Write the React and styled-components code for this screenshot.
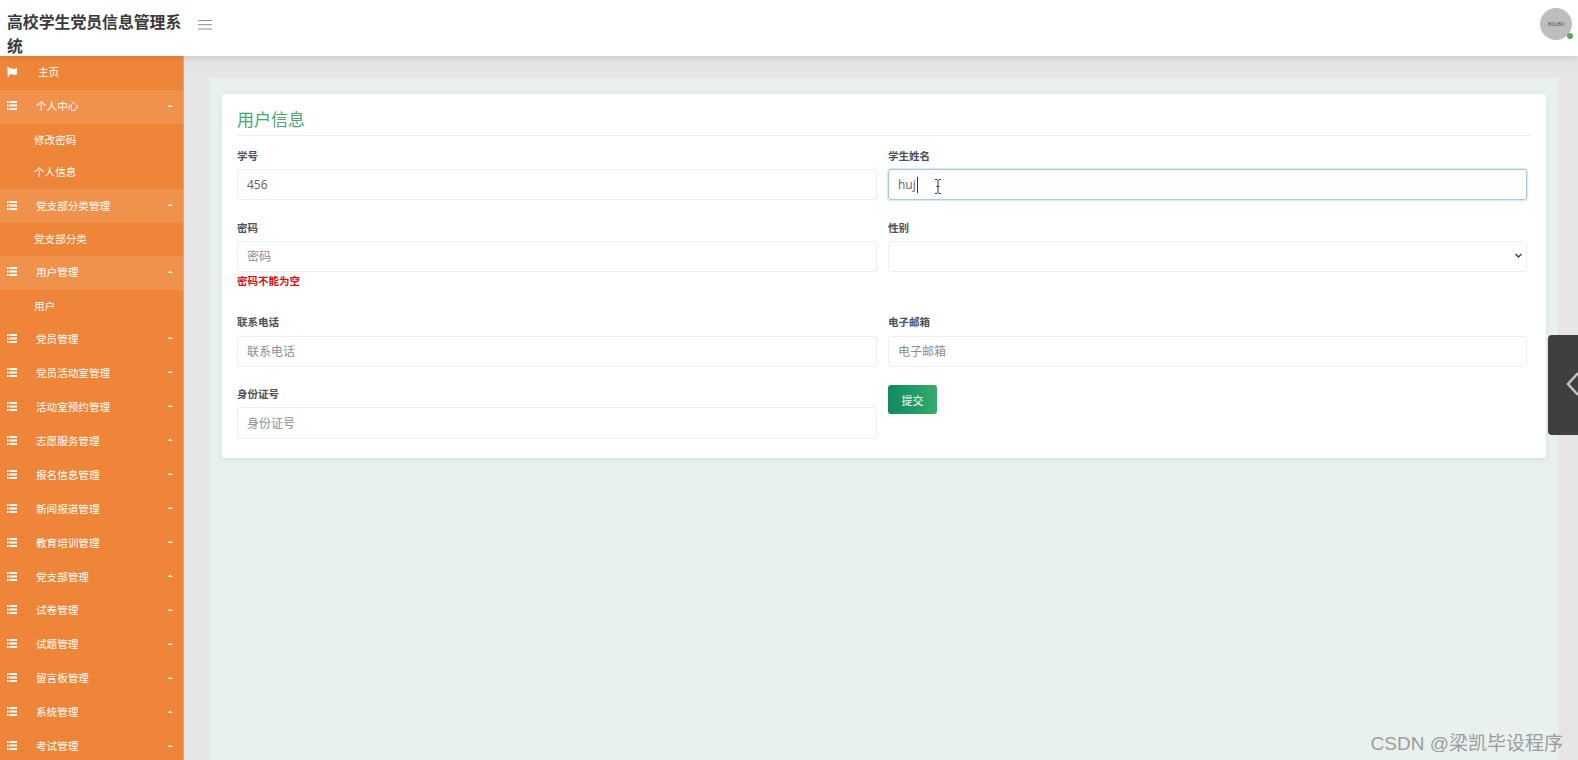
import React from "react";
import styled, { createGlobalStyle } from "styled-components";
import { FaFlag } from "react-icons/fa";

const Global = createGlobalStyle`
  html, body { margin: 0; padding: 0; height: 760px; overflow: hidden; background: #e6e5e7; }
  * { box-sizing: border-box; }
  body { font-family: "Liberation Sans", "Noto Sans CJK SC", sans-serif; }
`;

const Page = styled.div`
  position: relative;
  width: 1578px;
  height: 760px;
  overflow: hidden;
  display: grid;
  grid-template-rows: 56px 1fr;
`;

const Header = styled.header`
  position: relative;
  z-index: 2;
  display: flex;
  align-items: center;
  background: #fff;
  box-shadow: 0 1px 6px rgba(0, 0, 0, 0.1);
  padding-right: 6px;
`;

const Brand = styled.h1`
  width: 184px;
  align-self: flex-start;
  margin: 0;
  padding: 11px 0 0 7px;
  font-size: 15.85px;
  line-height: 24px;
  font-weight: 700;
  color: #3a3a3a;
  flex: none;
`;

const MenuToggle = styled.button`
  display: flex;
  padding: 0;
  margin: -7px 0 0 14px;
  border: 0;
  background: none;
  color: #8c8c8c;
`;

const Spacer = styled.div`
  flex: 1;
`;

const Avatar = styled.div`
  position: relative;
  width: 32px;
  height: 32px;
  margin-top: -8px;
  border-radius: 50%;
  background: #bdbdbd;
  color: #555;
  font-size: 6px;
  line-height: 32px;
  text-align: center;
`;

const OnlineDot = styled.span`
  position: absolute;
  right: -1px;
  bottom: 1px;
  width: 6px;
  height: 6px;
  border-radius: 50%;
  background: #5aa85a;
`;

const Body = styled.div`
  display: grid;
  grid-template-columns: 184px 1fr;
  min-height: 0;
`;

const Sidebar = styled.nav`
  background: #ee8539;
  display: flex;
  flex-direction: column;
  overflow: hidden;
  border-right: 1px solid #f0a06a;
`;

const Row = styled.div`
  flex: none;
  height: ${(p) => (p.$sub ? "32.7px" : "33.95px")};
  display: flex;
  align-items: center;
  color: #fff;
  font-size: 10.6px;
  padding-left: ${(p) => (p.$sub ? "34px" : "7px")};
  padding-bottom: 2px;
  background: ${(p) => (p.$open ? "#f0924c" : "transparent")};
`;

const RowIcon = styled.span`
  width: 29px;
  display: flex;
  flex: none;
  color: #fff;
  font-size: 10px;
`;

const HomeLabel = styled.span`
  margin-left: 2px;
`;

const Caret = styled.span`
  margin-left: auto;
  margin-right: 10px;
  width: 0;
  height: 0;
  border-left: 3px solid transparent;
  border-right: 3px solid transparent;
  border-bottom: 2px solid #fff;
`;

const Main = styled.main`
  padding: 22px 20px 0 26px;
  min-width: 0;
  background: linear-gradient(#dfdfe1, #e6e5e7 14px);
`;

const Panel = styled.section`
  height: 100%;
  background: #e8f1ed;
  padding: 16px 12px 0 12px;
`;

const Card = styled.div`
  background: #fff;
  border-radius: 2px;
  height: 364px;
  padding: 12px 15px 0 15px;
  box-shadow: 0 2px 6px rgba(0, 0, 0, 0.08);
`;

const Title = styled.h2`
  margin: 0;
  height: 30px;
  line-height: 29px;
  font-size: 17px;
  font-weight: 400;
  color: #4aa56f;
  border-bottom: 1px solid #eceeee;
`;

const Form = styled.form`
  display: grid;
  grid-template-columns: 640px 639px;
  column-gap: 11px;
  margin: 0;
  padding-top: 15px;
`;

const Field = styled.div`
  height: ${(p) => p.$h}px;
  position: relative;
`;

const Label = styled.label`
  display: block;
  height: 11px;
  line-height: 11px;
  margin-bottom: ${(p) => p.$gap ?? 7}px;
  font-size: 10.5px;
  font-weight: 700;
  color: #4b5157;
`;

const Input = styled.input`
  display: block;
  width: 100%;
  height: ${(p) => (p.$tall ? 32 : 31)}px;
  padding: 0 9px;
  font-family: "Open Sans", "Noto Sans CJK SC", sans-serif;
  font-size: 12px;
  color: #5a5f64;
  background: #fff;
  border: 1px solid ${(p) => (p.$focus ? "#a5c8e6" : "#eceff0")};
  border-radius: 3px;
  outline: none;
  box-shadow: ${(p) => (p.$focus ? "0 0 1px 1px rgba(150,190,225,.35)" : "none")};
  &::placeholder { color: #8b8f93; }
`;

const Select = styled.select`
  display: block;
  width: 100%;
  height: 31px;
  appearance: none;
  background: #fff;
  border: 1px solid #eceff0;
  border-radius: 3px;
  padding: 0 9px;
  color: #333;
  font-size: 12px;
`;

const SelectArrow = styled.svg`
  position: absolute;
  right: 5px;
  top: 30px;
  pointer-events: none;
`;

const ErrorText = styled.div`
  margin-top: 2px;
  font-size: 10.5px;
  line-height: 14px;
  font-weight: 700;
  color: #d0121b;
`;

const Submit = styled.button`
  width: 49px;
  height: 29px;
  margin-top: -4px;
  padding: 0;
  display: block;
  border: 0;
  border-radius: 3px;
  font-family: inherit;
  font-size: 11px;
  color: #fff;
  background: linear-gradient(90deg, #0e8a5f, #36ab6b);
`;

const TextCaret = styled.span`
  position: absolute;
  left: 29px;
  top: 26px;
  width: 1px;
  height: 16px;
  background: #333;
`;

const MouseCursor = styled.svg`
  position: absolute;
  left: 46px;
  top: 28px;
`;

const DrawerTab = styled.div`
  position: absolute;
  z-index: 3;
  right: 0;
  top: 335px;
  width: 30px;
  height: 100px;
  padding: 36px 0 0 18px;
  border-radius: 4px 0 0 4px;
  background: #3f3f3f;
  color: #c4c4c4;
`;

const Watermark = styled.div`
  position: absolute;
  z-index: 4;
  right: 15px;
  bottom: 2px;
  font-size: 19px;
  line-height: 28px;
  color: #9c9c9c;
  white-space: nowrap;
`;

const menu = [
  { t: "个人中心", open: true },
  { t: "修改密码", sub: true },
  { t: "个人信息", sub: true },
  { t: "党支部分类管理", open: true },
  { t: "党支部分类", sub: true },
  { t: "用户管理", open: true },
  { t: "用户", sub: true },
  { t: "党员管理" },
  { t: "党员活动室管理" },
  { t: "活动室预约管理" },
  { t: "志愿服务管理" },
  { t: "报名信息管理" },
  { t: "新闻报道管理" },
  { t: "教育培训管理" },
  { t: "党支部管理" },
  { t: "试卷管理" },
  { t: "试题管理" },
  { t: "留言板管理" },
  { t: "系统管理" },
  { t: "考试管理" },
];

function BarsIcon() {
  return (
    <svg width="10" height="9" viewBox="0 0 10 9" fill="#fff">
      <path d="M0 0h1.500v2H0zM2.500 0H10v2H2.500zM0 3.500h1.500v2H0zM2.500 3.500H10v2H2.500zM0 7h1.500v2H0zM2.500 7H10v2H2.500z" />
    </svg>
  );
}

export default function App() {
  return (
    <Page>
      <Global />
      <Header>
        <Brand>高校学生党员信息管理系统</Brand>
        <MenuToggle type="button" aria-label="menu">
          <svg width="14" height="10" viewBox="0 0 14 10" fill="none" stroke="currentColor" strokeWidth="1">
            <path d="M0 .5h14M0 4.700h14M0 9h14" />
          </svg>
        </MenuToggle>
        <Spacer />
        <Avatar>
          80x80
          <OnlineDot />
        </Avatar>
      </Header>
      <Body>
        <Sidebar>
          <Row>
            <RowIcon><FaFlag /></RowIcon>
            <HomeLabel>主页</HomeLabel>
          </Row>
          {menu.map((m) => (
            <Row key={m.t} $sub={m.sub} $open={m.open}>
              {!m.sub && <RowIcon><BarsIcon /></RowIcon>}
              {m.t}
              {!m.sub && <Caret />}
            </Row>
          ))}
        </Sidebar>
        <Main>
          <Panel>
            <Card>
              <Title>用户信息</Title>
              <Form>
                <Field $h={72}>
                  <Label>学号</Label>
                  <Input readOnly value="456" />
                </Field>
                <Field $h={72}>
                  <Label>学生姓名</Label>
                  <Input $focus readOnly value="huj" />
                  <TextCaret />
                  <MouseCursor width="8" height="15" viewBox="0 0 8 15" fill="none" stroke="#333" strokeWidth="1">
                    <path d="M1 .5h2l1 1 1-1h2M4 1.500v12M1 14.500h2l1-1 1 1h2M2.500 7.500h3" />
                  </MouseCursor>
                </Field>
                <Field $h={94}>
                  <Label>密码</Label>
                  <Input readOnly placeholder="密码" />
                  <ErrorText>密码不能为空</ErrorText>
                </Field>
                <Field $h={94}>
                  <Label>性别</Label>
                  <Select><option></option></Select>
                  <SelectArrow width="7" height="5" viewBox="0 0 7 5" fill="none" stroke="#444" strokeWidth="1.500">
                    <path d="M.5 1 3.500 4l3-3" />
                  </SelectArrow>
                </Field>
                <Field $h={72}>
                  <Label $gap={8}>联系电话</Label>
                  <Input readOnly placeholder="联系电话" />
                </Field>
                <Field $h={72}>
                  <Label $gap={8}>电子邮箱</Label>
                  <Input readOnly placeholder="电子邮箱" />
                </Field>
                <Field $h={50}>
                  <Label>身份证号</Label>
                  <Input $tall readOnly placeholder="身份证号" />
                </Field>
                <Field $h={50}>
                  <Submit type="button">提交</Submit>
                </Field>
              </Form>
            </Card>
          </Panel>
        </Main>
      </Body>
      <DrawerTab>
        <svg width="12" height="26" viewBox="0 0 12 26" fill="none" stroke="currentColor" strokeWidth="2.500">
          <path d="M12 2 2 13l10 11" />
        </svg>
      </DrawerTab>
      <Watermark>CSDN @梁凯毕设程序</Watermark>
    </Page>
  );
}
